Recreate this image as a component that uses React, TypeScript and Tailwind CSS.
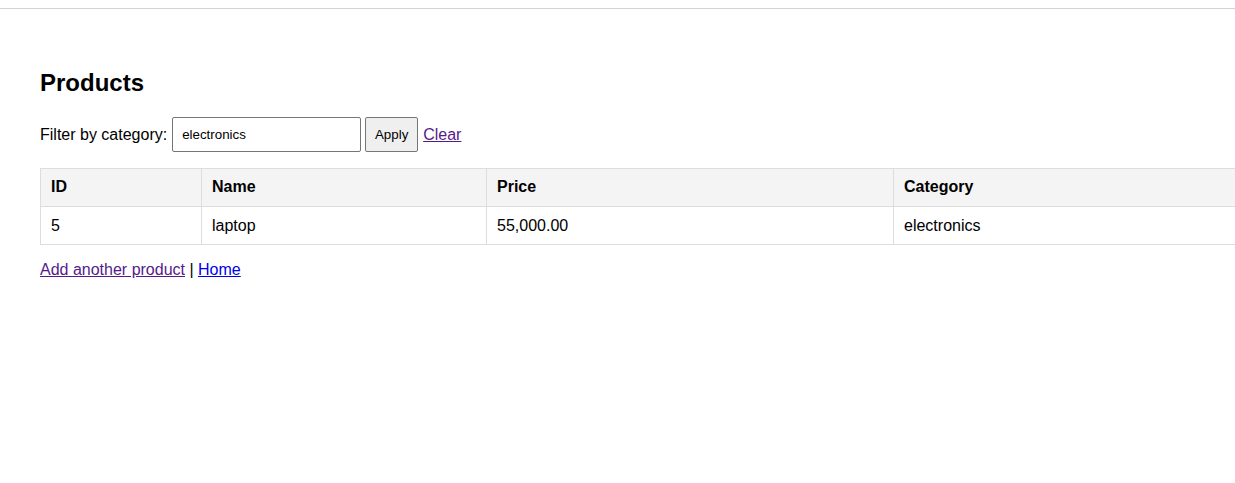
export default function App() {
  const rows = [{ id: 5, name: "laptop", price: "55,000.00", category: "electronics" }];

  return (
    <div className="min-h-screen bg-white text-black overflow-hidden font-['Liberation_Sans',Arial,sans-serif] text-[16px] leading-[18px]">
      <div className="h-[9px] border-b border-[#d3d3d3]" />
      <div className="px-10">
        <h2 className="mt-[60px] text-[24px] leading-[28px] font-bold">Products</h2>

        <form className="mt-5 flex items-center h-[35px]" onSubmit={(e) => e.preventDefault()}>
          <label htmlFor="cat">Filter by category:</label>
          <input
            id="cat"
            defaultValue="electronics"
            className="ml-[5px] w-[189px] h-[35px] px-[9px] border border-[#767676] rounded-[2px] text-[13.33px] outline-none bg-white"
          />
          <button
            type="submit"
            className="ml-1 w-[53px] h-[35px] border border-[#767676] rounded-[2px] bg-[#efefef] text-[13.33px]"
          >
            Apply
          </button>
          <a href="#" className="ml-[5px] text-[#551a8b] underline">Clear</a>
        </form>

        <table className="mt-4 w-[1240px] border-collapse">
          <thead>
            <tr className="bg-[#f4f4f4] font-bold text-left">
              <th className="w-[161px] h-[38px] px-[10px] pb-[2px] border border-[#dddddd]">ID</th>
              <th className="w-[285px] px-[10px] pb-[2px] border border-[#dddddd]">Name</th>
              <th className="w-[407px] px-[10px] pb-[2px] border border-[#dddddd]">Price</th>
              <th className="px-[10px] pb-[2px] border border-[#dddddd]">Category</th>
            </tr>
          </thead>
          <tbody>
            {rows.map((r) => (
              <tr key={r.id}>
                <td className="h-[38px] px-[10px] border border-[#dddddd]">{r.id}</td>
                <td className="px-[10px] border border-[#dddddd]">{r.name}</td>
                <td className="px-[10px] border border-[#dddddd]">{r.price}</td>
                <td className="px-[10px] border border-[#dddddd]">{r.category}</td>
              </tr>
            ))}
          </tbody>
        </table>

        <p className="mt-4">
          <a href="#" className="text-[#551a8b] underline">Add another product</a> |{" "}
          <a href="#" className="text-[#0000ee] underline">Home</a>
        </p>
      </div>
    </div>
  );
}
